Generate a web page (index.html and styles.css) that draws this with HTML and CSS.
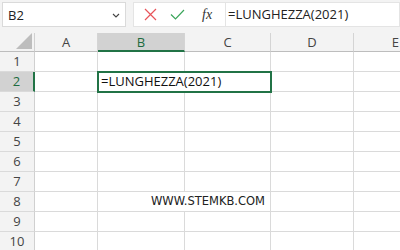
FILE: index.html
```html
<!DOCTYPE html>
<html>
<head>
<meta charset="utf-8">
<link rel="stylesheet" href="styles.css">
</head>
<body>
<div class="app">
  <div class="toolbar">
    <div class="namebox">
      <span class="name">B2</span>
      <svg class="chev" width="8" height="5" viewBox="0 0 8 5"><path d="M1 1 L4 4 L7 1" fill="none" stroke="#444" stroke-width="1.1"/></svg>
    </div>
    <div class="fbtns">
      <svg class="ic" width="13" height="13" viewBox="0 0 13 13"><path d="M1 1 L12 12 M12 1 L1 12" stroke="#e8545a" stroke-width="1.2" fill="none"/></svg>
      <svg class="ic" width="15" height="11" viewBox="0 0 15 11"><path d="M1 5.5 L5.5 10 L14 1" stroke="#3aa55a" stroke-width="1.2" fill="none"/></svg>
      <span class="fx">fx</span>
    </div>
    <div class="finput">=LUNGHEZZA(2021)</div>
  </div>
  <div class="sheetwrap">
  <div class="sheet">
    <div class="corner"><svg width="16" height="16" viewBox="0 0 16 16"><path d="M16 0 L16 16 L0 16 Z" fill="#bdbdbd"/></svg></div>
    <div class="ch">A</div>
    <div class="ch sel">B</div>
    <div class="ch">C</div>
    <div class="ch">D</div>
    <div class="ch che">E</div>

    <div class="rh">1</div><div class="c"></div><div class="c"></div><div class="c"></div><div class="c"></div><div class="c"></div>
    <div class="rh rsel">2</div><div class="c"></div><div class="c span2 active">=LUNGHEZZA(2021)</div><div class="c"></div><div class="c"></div>
    <div class="rh">3</div><div class="c"></div><div class="c"></div><div class="c"></div><div class="c"></div><div class="c"></div>
    <div class="rh">4</div><div class="c"></div><div class="c"></div><div class="c"></div><div class="c"></div><div class="c"></div>
    <div class="rh">5</div><div class="c"></div><div class="c"></div><div class="c"></div><div class="c"></div><div class="c"></div>
    <div class="rh">6</div><div class="c"></div><div class="c"></div><div class="c"></div><div class="c"></div><div class="c"></div>
    <div class="rh">7</div><div class="c"></div><div class="c"></div><div class="c"></div><div class="c"></div><div class="c"></div>
    <div class="rh">8</div><div class="c"></div><div class="c span2 site">WWW.STEMKB.COM</div><div class="c"></div><div class="c"></div>
    <div class="rh">9</div><div class="c"></div><div class="c"></div><div class="c"></div><div class="c"></div><div class="c"></div>
    <div class="rh">10</div><div class="c"></div><div class="c"></div><div class="c"></div><div class="c"></div><div class="c"></div>
  </div>
  </div>
</div>
</body>
</html>
```
FILE: styles.css
```css
* { box-sizing: border-box; }
html, body { margin: 0; padding: 0; }
body { width: 400px; height: 250px; overflow: hidden; background: #f3f3f3; font-family: "Open Sans", "Noto Sans", sans-serif; }
.app { display: flex; flex-direction: column; width: 400px; height: 250px; overflow: hidden; }
.toolbar { display: flex; height: 33px; flex: none; padding: 2px 0 0 2px; align-items: flex-start; }
.namebox { width: 124px; height: 25px; background: #fff; border: 1px solid #dadada; display: flex; align-items: center; justify-content: space-between; padding: 0 5px 0 5px; }
.name { font-size: 13px; color: #222; }
.chev { margin-top: 1px; }
.fbtns { margin-left: 7px; width: 92px; height: 25px; background: #fff; border: 1px solid #e4e4e4; border-right: none; display: flex; align-items: center; padding-left: 10px; gap: 13px; }
.fx { font-family: "Liberation Serif", serif; font-style: italic; font-size: 14px; color: #333; margin-left: 4px; }
.finput { flex: 1; height: 25px; background: #fff; border: 1px solid #e4e4e4; font-size: 13px; color: #222; line-height: 23px; padding-left: 2px; }
.sheetwrap { width: 400px; flex: 1; overflow: hidden; background: #fff; }
.sheet { display: grid; grid-template-columns: 35px 63px 87px 86px 83px 47px; grid-template-rows: 19px repeat(10, 20px); background: #fff; }
.corner { background: #f3f3f3; border-right: 1px solid #d0d0d0; border-bottom: 1px solid #bdbdbd; display: flex; align-items: flex-end; justify-content: flex-end; padding: 0 2px 2px 0; }
.ch { background: #f3f3f3; border-right: 1px solid #d4d4d4; border-bottom: 1px solid #bdbdbd; font-size: 13px; color: #444; text-align: center; line-height: 18px; }
.ch.che { text-align: right; padding-right: 1px; overflow: hidden; }
.ch.sel { background: #d2d2d2; color: #1e6b40; border-bottom: 2px solid #217346; }
.rh { background: #f3f3f3; border-right: 1px solid #d0d0d0; border-bottom: 1px solid #dadada; font-size: 13px; color: #444; text-align: center; line-height: 19px; }
.rh.rsel { background: #d2d2d2; color: #1e6b40; border-right: 2px solid #217346; }
.c { border-right: 1px solid #dadada; border-bottom: 1px solid #dadada; font-size: 13px; color: #111; line-height: 19px; white-space: nowrap; }
.c.active { padding-left: 3px; outline: 2px solid #217346; outline-offset: -1px; position: relative; z-index: 2; }
.span2 { grid-column: span 2; }
.site { font-family: "DejaVu Sans", sans-serif; font-size: 11.5px; text-align: right; padding-right: 5px; color: #222; }
```
